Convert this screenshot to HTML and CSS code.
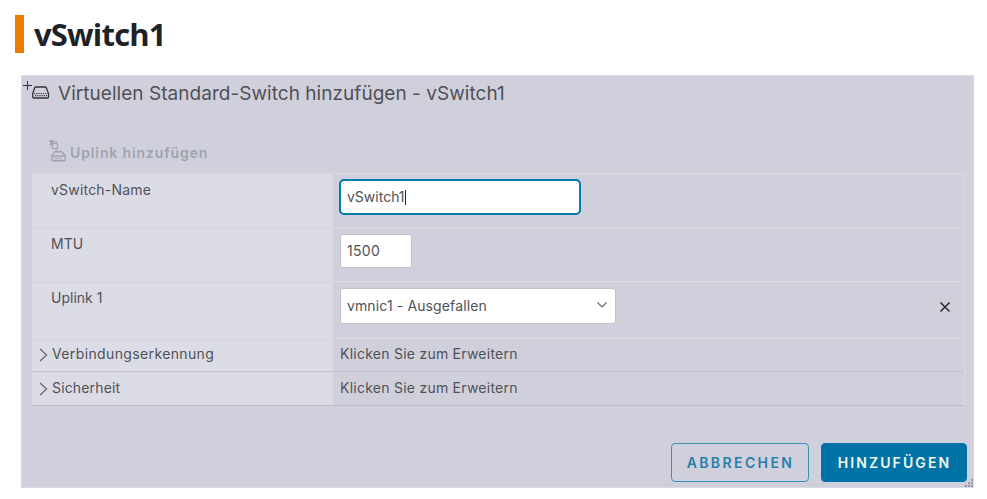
FILE: index.html
```html
<!DOCTYPE html>
<html lang="de">
<head>
<meta charset="utf-8">
<title>vSwitch1</title>
<link rel="stylesheet" href="styles.css">
</head>
<body>
<h1 class="heading">vSwitch1</h1>
<main class="dialog">
  <header class="dialog-title">
    <svg class="title-icon" width="28" height="22" viewBox="0 0 28 22" fill="none" stroke="#303238">
      <path d="M1 5.5H10M5.5 1V10" stroke-width="1"/>
      <path d="M10.7 17V13.5L12.7 7.8Q13 7 13.9 7H23.1Q24 7 24.3 7.8L26.5 13.5V17Q26.5 18 25.5 18H11.7Q10.7 18 10.7 17" stroke-width="1.3"/>
      <path d="M12 13.5H25.5M13 15.7H25" stroke-width="1.2" stroke-dasharray="1.2 1"/>
    </svg>
    <span class="title-text">Virtuellen Standard-Switch hinzufügen - vSwitch1</span>
  </header>
  <div class="toolbar">
    <svg class="uplink-icon" width="20" height="24" viewBox="0 0 20 24" fill="none" stroke="#a1a2ae">
      <path d="M1 2H6M3 1V7M2 6L6 2" stroke-width="1.4"/>
      <path d="M4.5 4.5H9.5V9.5H4.5ZM6 2.5H9M8 10V12.5H13" stroke-width="1.2"/>
      <path d="M4.2 16.5L6 13.5Q6.4 12.7 7.3 12.7H13.2Q14 12.7 14.5 13.5L17.2 17V20.5Q17.2 21.8 16 21.8H5Q3.8 21.8 3.8 20.5V17H17" stroke-width="1.4"/>
      <path d="M6 19.5H15" stroke-width="1.3" stroke-dasharray="1.3 1"/>
    </svg>
    <span class="toolbar-text">Uplink hinzufügen</span>
  </div>
  <section class="settings">
    <div class="row row-field">
      <div class="label"><span class="t-name">vSwitch-Name</span></div>
      <div class="value"><div class="input input-focus"><span>vSwitch1</span><i class="caret"></i></div></div>
    </div>
    <div class="row row-field">
      <div class="label"><span>MTU</span></div>
      <div class="value"><div class="input input-mtu"><span class="t-mtu">1500</span></div></div>
    </div>
    <div class="row row-uplink">
      <div class="label"><span>Uplink 1</span></div>
      <div class="value">
        <div class="input select"><span class="t-select">vmnic1 - Ausgefallen</span>
          <svg class="arrow" width="12" height="8" viewBox="0 0 12 8" fill="none" stroke="#65666b" stroke-width="1.2"><path d="M1.5 1.5L6 6L10.5 1.5"/></svg>
        </div>
        <svg class="remove" width="12" height="12" viewBox="0 0 12 12" fill="none" stroke="#292a2d" stroke-width="1.5"><path d="M1.5 1.5L10.5 10.5M10.5 1.5L1.5 10.5"/></svg>
      </div>
    </div>
    <div class="row row-fold">
      <div class="label"><svg class="chevron" width="9" height="14" viewBox="0 0 9 14" fill="none" stroke="#65666b" stroke-width="1.2"><path d="M1 1L7.5 7L1 13"/></svg><span class="t-conn">Verbindungserkennung</span></div>
      <div class="value"><span class="t-expand">Klicken Sie zum Erweitern</span></div>
    </div>
    <div class="row row-fold">
      <div class="label"><svg class="chevron" width="9" height="14" viewBox="0 0 9 14" fill="none" stroke="#65666b" stroke-width="1.2"><path d="M1 1L7.5 7L1 13"/></svg><span class="t-sec">Sicherheit</span></div>
      <div class="value"><span class="t-expand">Klicken Sie zum Erweitern</span></div>
    </div>
  </section>
  <footer class="actions">
    <div class="button cancel"><span>ABBRECHEN</span></div>
    <div class="button submit"><span>HINZUFÜGEN</span></div>
  </footer>
  <svg class="grip" width="9" height="9" viewBox="0 0 9 9" fill="#9697a2"><path d="M6 0h2v2h-2zM3 3h2v2h-2zM6 3h2v2h-2zM0 6h2v2h-2zM3 6h2v2h-2zM6 6h2v2h-2z"/></svg>
</main>
</body>
</html>
```
FILE: styles.css
```css
* { box-sizing: border-box; }
body {
  margin: 0;
  padding: 15px 13px 0 15px;
  height: 499px;
  overflow: hidden;
  background: #fff;
  color: #505156;
  font: 14px/20px Inter, "Open Sans", sans-serif;
}
.heading {
  margin: 0;
  height: 38px;
  border-left: 9px solid #ee7a00;
  padding-left: 10px;
  color: #1d2228;
  font: bold 31px/38px "Open Sans", "Noto Sans", sans-serif;
  letter-spacing: -0.8px;
}
.dialog {
  position: relative;
  width: 953px;
  height: 413px;
  margin: 22px 0 0 6px;
  background: #d0d0dd;
  border: 1px solid #d8d8e3;
  border-top-color: #dddde7;
}
.dialog-title {
  display: flex;
  height: 36px;
}
.title-icon { margin: 4px 8px 0 0; flex: none; }
.title-text {
  font-size: 19px;
  line-height: 36px;
  letter-spacing: 0.04px;
  white-space: nowrap;
}
.toolbar {
  display: flex;
  height: 61px;
  padding: 26px 0 0 26px;
  color: #9fa3af;
  font-weight: 600;
}
.uplink-icon { flex: none; margin-top: 1px; }
.toolbar-text { margin-left: 2px; line-height: 30px; letter-spacing: 0.88px; }
.settings {
  width: 933px;
  margin-left: 10px;
  border-right: 1px solid #dadae5;
  border-bottom: 1px solid #bdbecb;
}
.row {
  display: grid;
  grid-template-columns: 301px 1fr;
  border-top: 1px solid #dadae5;
}
.row-field { height: 54px; }
.row-uplink { height: 57px; }
.row-fold { height: 33px; }
.row-fold + .row-fold { height: 34px; border-top-color: #c3c4d0; }
.label {
  background: #dcdce6;
  padding: 5px 0 0 19px;
  border-top: 1px solid #d6d6e1;
}
.t-name { letter-spacing: 0.2px; }
.t-mtu { letter-spacing: 0.3px; }
.t-select { letter-spacing: 0.12px; }
.t-conn { letter-spacing: 0.37px; }
.t-sec { letter-spacing: 0.15px; }
.t-expand { letter-spacing: 0.25px; }
.value {
  display: flex;
  align-items: flex-start;
  padding: 5px 0 0 7px;
  white-space: nowrap;
}
.row-fold .label { display: flex; padding: 4px 0 0 6px; }
.row-fold .value { padding-top: 5px; }
.row-fold + .row-fold .label { padding-top: 5px; }
.row-fold + .row-fold .value { padding-top: 6px; }
.chevron { flex: none; margin: 4px 4px 0 1px; }
.input {
  display: flex;
  align-items: center;
  height: 34px;
  padding: 0 6px;
  background: #fff;
  border: 1px solid #c1c2c5;
  border-radius: 3px;
}
.input-focus {
  width: 242px;
  height: 36px;
  margin-left: -1px;
  padding-left: 6px;
  border: 2px solid #0079ad;
  border-radius: 5px;
}
.caret { width: 1px; height: 15px; background: #222; }
.input-mtu { width: 72px; margin-top: 1px; }
.select {
  width: 276px;
  height: 36px;
  margin-top: 1px;
  justify-content: space-between;
  padding-right: 7px;
}
.arrow { margin-top: -3px; }
.remove { margin: 14px 13px 0 auto; }
.actions {
  display: flex;
  justify-content: flex-end;
  gap: 12px;
  margin: 37px 6px 0 0;
}
.button {
  display: flex;
  align-items: center;
  justify-content: center;
  height: 39px;
  border: 1px solid #3d91b9;
  border-radius: 4px;
  font-weight: 600;
  font-size: 14px;
}
.cancel { width: 138px; color: #247fab; letter-spacing: 2.4px; padding-left: 1px; }
.submit { width: 146px; background: #0073a6; border-color: #0073a6; color: #f2f6ed; letter-spacing: 2.1px; padding-left: 1px; }
.grip { position: absolute; right: -1px; bottom: -1px; }
```
